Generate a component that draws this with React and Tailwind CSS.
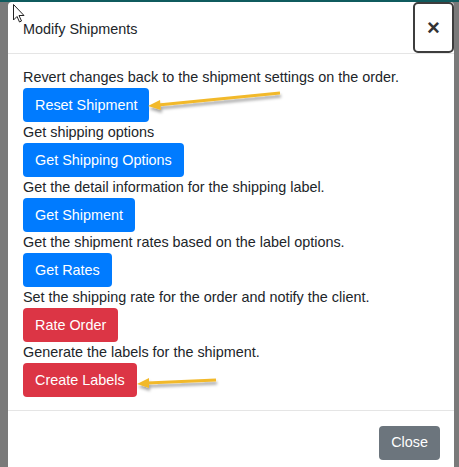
import React from 'react';

const steps = [
  { text: 'Revert changes back to the shipment settings on the order.', label: 'Reset Shipment', color: 'blue' },
  { text: 'Get shipping options', label: 'Get Shipping Options', color: 'blue' },
  { text: 'Get the detail information for the shipping label.', label: 'Get Shipment', color: 'blue' },
  { text: 'Get the shipment rates based on the label options.', label: 'Get Rates', color: 'blue' },
  { text: 'Set the shipping rate for the order and notify the client.', label: 'Rate Order', color: 'red' },
  { text: 'Generate the labels for the shipment.', label: 'Create Labels', color: 'red' },
];

function Arrows() {
  return (
    <svg className="absolute left-0 top-0 pointer-events-none" width="459" height="467">
      <defs>
        <filter id="sh" x="-20%" y="-50%" width="140%" height="300%">
          <feDropShadow dx="1" dy="3" stdDeviation="1.5" floodColor="#000" floodOpacity="0.35" />
        </filter>
      </defs>
      <g filter="url(#sh)" fill="#f2b92c" stroke="#f2b92c">
        <line x1="280" y1="93" x2="158" y2="105" strokeWidth="3" />
        <polygon points="148,106 160,100 161,110" strokeWidth="0" />
        <line x1="216" y1="380" x2="147" y2="383" strokeWidth="3" />
        <polygon points="137,384 149,378 149,388" strokeWidth="0" />
      </g>
      {/* mouse cursor */}
      <path d="M13.5 4.5 L13.5 20 L17 16.5 L19.5 22 L21.5 21 L19 15.5 L24 15.5 Z" fill="#fff" stroke="#222" strokeWidth="1" />
    </svg>
  );
}

export default function App() {
  return (
    <div
      className="relative w-[459px] h-[467px] overflow-hidden bg-[#7a7a7a] text-[#212529]"
      style={{ fontFamily: '"Liberation Sans", Arial, sans-serif' }}
    >
      <div className="h-[2px] bg-[#0f5b5e]" />
      <div className="ml-[8px] w-[446px] h-[470px] bg-white rounded-t-[4px] flex flex-col">
        <div className="flex items-start justify-between border-b border-[#e5e5e5] h-[52px]">
          <h5 className="pl-[15px] pt-[17px] text-[14.4px] leading-[20px] text-[#212529]">Modify Shipments</h5>
          <button className="w-[41px] h-[51px] border-2 border-[#3d3d3d] rounded-[5px] flex items-center justify-center text-[#333] text-[22px] font-bold leading-none">
            ×
          </button>
        </div>
        <div className="px-[15px] pt-[13px] pb-[13px] text-[14.4px] border-b border-[#e5e5e5]">
          {steps.map(s => (
            <div key={s.label}>
              <p className="leading-[21px]">{s.text}</p>
              <button
                className={`h-[34px] px-[12px] rounded-[4px] text-white text-[14.4px] leading-[21px] ${s.color === 'red' ? 'bg-[#dc3545]' : 'bg-[#007bff]'}`}
              >
                {s.label}
              </button>
            </div>
          ))}
        </div>
        <div className="flex justify-end pt-[15px] pr-[14px]">
          <button className="h-[34px] px-[12px] rounded-[4px] bg-[#6c757d] text-white text-[14.4px]">Close</button>
        </div>
      </div>
      <Arrows />
    </div>
  );
}
